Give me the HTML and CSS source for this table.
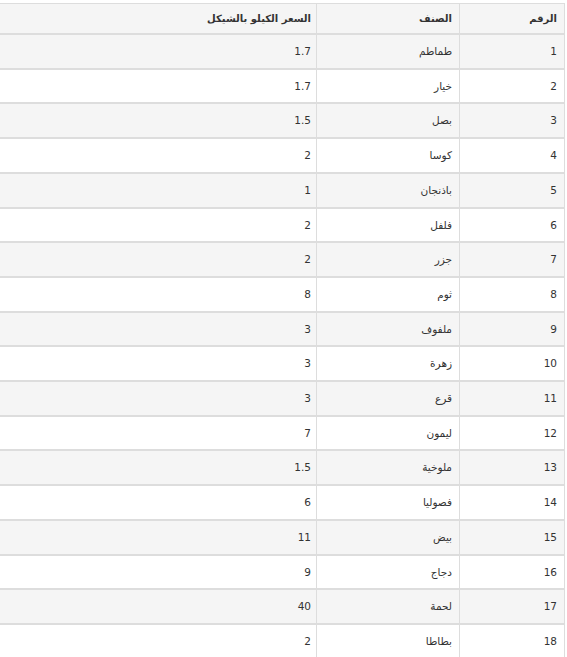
FILE: index.html
```html
<!DOCTYPE html>
<html lang="ar" dir="rtl">
<head>
<meta charset="utf-8">
<link rel="stylesheet" href="styles.css">
</head>
<body>
<table class="prices">
  <thead>
    <tr><th class="c-num">الرقم</th><th class="c-name">الصنف</th><th class="c-price">السعر الكيلو بالشيكل</th></tr>
  </thead>
  <tbody>
    <tr><td>1</td><td>طماطم</td><td>1.7</td></tr>
    <tr><td>2</td><td>خيار</td><td>1.7</td></tr>
    <tr><td>3</td><td>بصل</td><td>1.5</td></tr>
    <tr><td>4</td><td>كوسا</td><td>2</td></tr>
    <tr><td>5</td><td>باذنجان</td><td>1</td></tr>
    <tr><td>6</td><td>فلفل</td><td>2</td></tr>
    <tr><td>7</td><td>جزر</td><td>2</td></tr>
    <tr><td>8</td><td>ثوم</td><td>8</td></tr>
    <tr><td>9</td><td>ملفوف</td><td>3</td></tr>
    <tr><td>10</td><td>زهرة</td><td>3</td></tr>
    <tr><td>11</td><td>قرع</td><td>3</td></tr>
    <tr><td>12</td><td>ليمون</td><td>7</td></tr>
    <tr><td>13</td><td>ملوخية</td><td>1.5</td></tr>
    <tr><td>14</td><td>فصوليا</td><td>6</td></tr>
    <tr><td>15</td><td>بيض</td><td>11</td></tr>
    <tr><td>16</td><td>دجاج</td><td>9</td></tr>
    <tr><td>17</td><td>لحمة</td><td>40</td></tr>
    <tr><td>18</td><td>بطاطا</td><td>2</td></tr>
  </tbody>
</table>
</body>
</html>
```

FILE: styles.css
```css
html, body {
  margin: 0;
  padding: 0;
  background: #fff;
}
body {
  padding-top: 3px;
  font-family: "DejaVu Sans", sans-serif;
  font-size: 10.5px;
  color: #333;
}
.prices {
  width: 566px;
  margin-right: 2px;
  border-collapse: collapse;
  table-layout: fixed;
  border-top: 1px solid #ddd;
  border-right: 1px solid #ddd;
}
.prices th,
.prices td {
  text-align: right;
  padding: 8px 7px 8px 7px;
  border-left: 1px solid #ddd;
  vertical-align: middle;
}
.prices th {
  font-weight: bold;
  font-size: 10px;
  background: #f5f5f5;
  border-bottom: 2px solid #ddd;
  padding-top: 7px;
  padding-bottom: 7px;
  height: 15px;
  line-height: 15px;
}
.prices td {
  border-top: 2px solid #ddd;
  height: 16.7px;
  line-height: 16.7px;
}
.prices thead + tbody tr:first-child td {
  border-top: 0;
}
.prices .c-num { width: 90px; }
.prices .c-name { width: 128px; }
.prices .c-price { border-left: 0; padding-left: 5px; padding-right: 5px; }
.prices tbody td:last-child { border-left: 0; padding-left: 5px; padding-right: 5px; }
.prices tbody tr:nth-child(odd) td {
  background: #f5f5f5;
}
```
